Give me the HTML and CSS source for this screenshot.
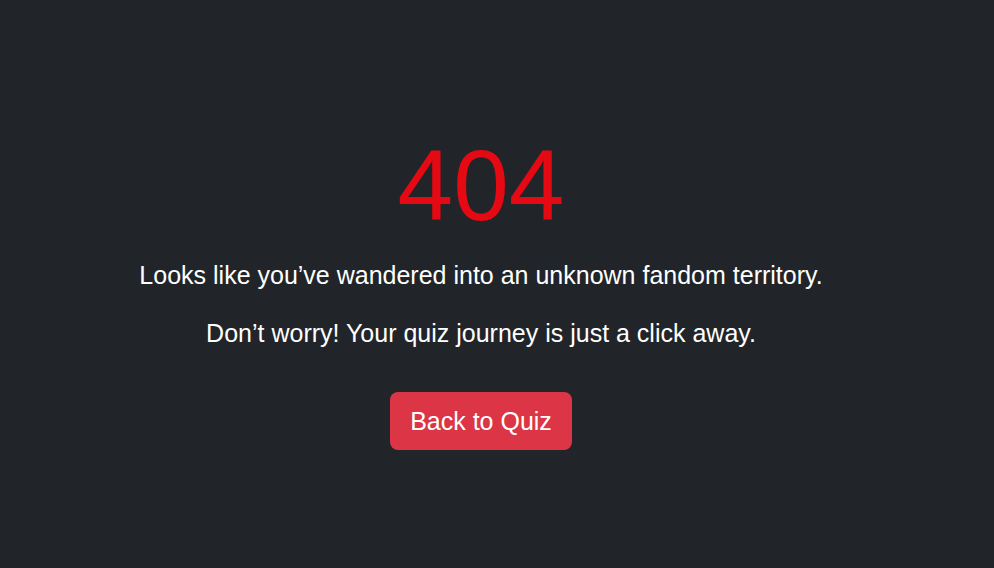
FILE: index.html
```html
<!DOCTYPE html>
<html lang="en">
<head>
<meta charset="utf-8">
<title>404</title>
<link rel="stylesheet" href="styles.css">
</head>
<body>
<main class="page">
  <h1 class="code">404</h1>
  <p class="msg">Looks like you’ve wandered into an unknown fandom territory.</p>
  <p class="msg">Don’t worry! Your quiz journey is just a click away.</p>
  <a class="btn" href="#">Back to Quiz</a>
</main>
</body>
</html>
```
FILE: styles.css
```css
html, body {
  margin: 0;
  height: 100%;
  background: #212529;
}
body {
  font-family: "Liberation Sans", Arial, sans-serif;
  color: #fff;
}
.page {
  box-sizing: border-box;
  width: 962px;
  padding-top: 130px;
  display: flex;
  flex-direction: column;
  align-items: center;
  text-align: center;
}
.code {
  margin: 0 0 17px;
  font-size: 100px;
  font-weight: 400;
  line-height: 1.1;
  color: #e50914;
}
.msg {
  margin: 0 0 22px;
  font-size: 25px;
  line-height: 36px;
}
.btn {
  margin-top: 19px;
  display: inline-block;
  padding: 10px 20px;
  font-size: 25px;
  line-height: 38px;
  color: #fff;
  text-decoration: none;
  background: #dc3545;
  border-radius: 8px;
}
```
